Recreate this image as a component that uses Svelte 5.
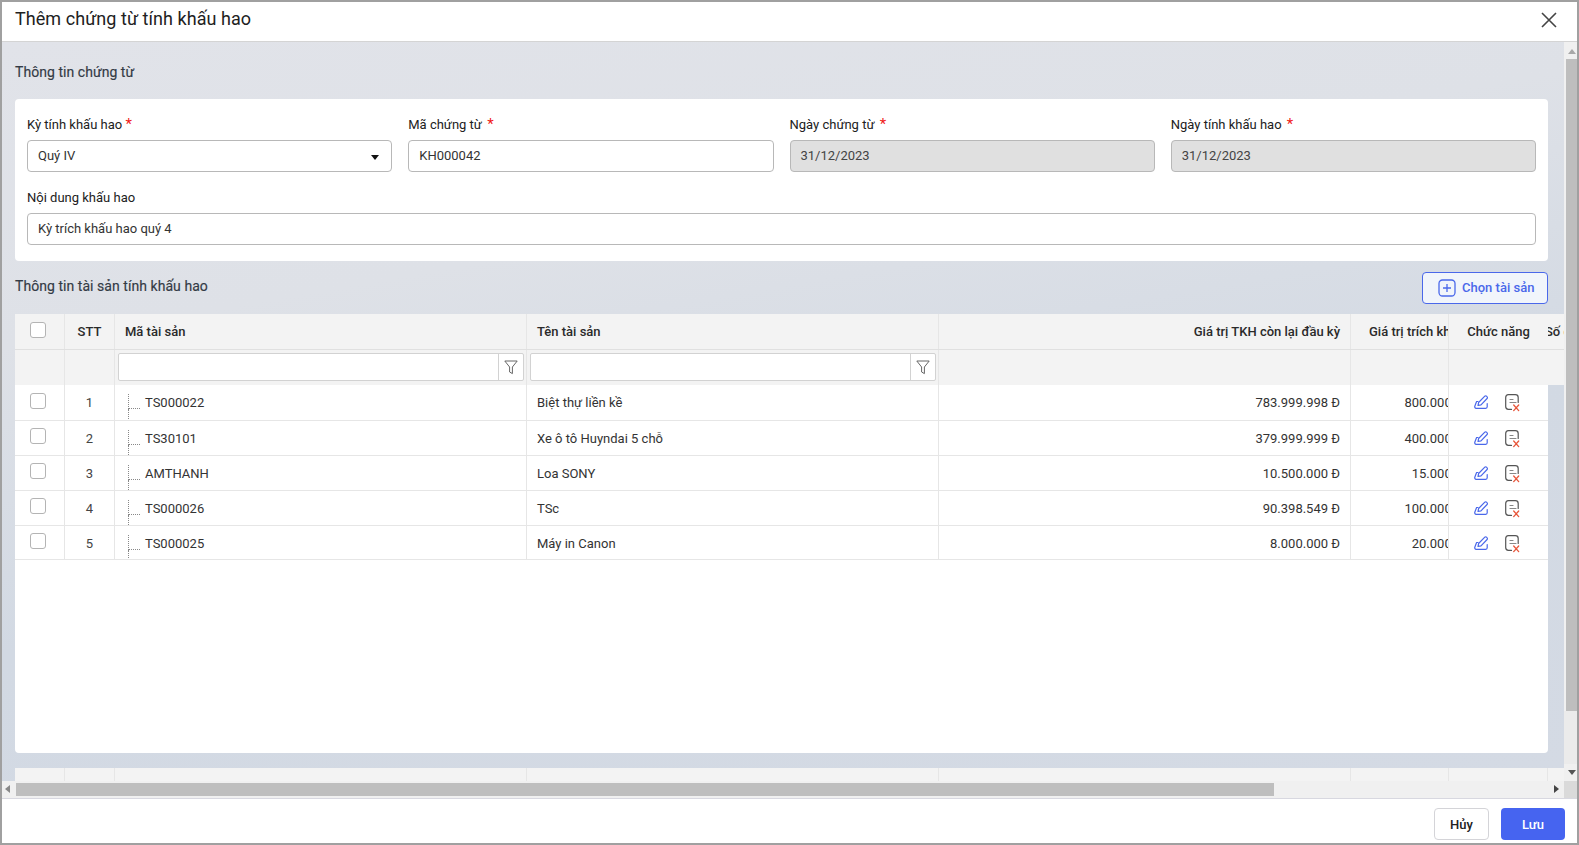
<script>
  const rows = [
    ['1', 'TS000022', 'Biệt thự liền kề', '783.999.998 Đ', '800.000.000 Đ'],
    ['2', 'TS30101', 'Xe ô tô Huyndai 5 chỗ', '379.999.999 Đ', '400.000.000 Đ'],
    ['3', 'AMTHANH', 'Loa SONY', '10.500.000 Đ', '15.000.000 Đ'],
    ['4', 'TS000026', 'TSc', '90.398.549 Đ', '100.000.000 Đ'],
    ['5', 'TS000025', 'Máy in Canon', '8.000.000 Đ', '20.000.000 Đ']
  ];
  const pad = ['', '', '', '', '', ''];
</script>

<div class="modal">
  <header class="head">
    <h1>Thêm chứng từ tính khấu hao</h1>
    <svg class="close" width="16" height="16" viewBox="0 0 16 16"><path d="M1 1L15 15M15 1L1 15" stroke="#444" stroke-width="1.6" fill="none"/></svg>
  </header>

  <div class="mid">
    <div class="scroll">
      <div class="content">
        <h2 class="first">Thông tin chứng từ</h2>
        <section class="card">
          <div class="four">
            <div class="field">
              <span class="label">Kỳ tính khấu hao <i>*</i></span>
              <div class="input">Quý IV<b class="caret"></b></div>
            </div>
            <div class="field">
              <span class="label">Mã chứng từ <i class="sp">*</i></span>
              <div class="input">KH000042</div>
            </div>
            <div class="field">
              <span class="label">Ngày chứng từ <i class="sp">*</i></span>
              <div class="input off">31/12/2023</div>
            </div>
            <div class="field">
              <span class="label">Ngày tính khấu hao <i class="sp">*</i></span>
              <div class="input off">31/12/2023</div>
            </div>
          </div>
          <div class="field second">
            <span class="label">Nội dung khấu hao</span>
            <div class="input">Kỳ trích khấu hao quý 4</div>
          </div>
        </section>

        <div class="bar">
          <h2>Thông tin tài sản tính khấu hao</h2>
          <button class="pick">
            <svg width="18" height="18" viewBox="0 0 18 18" fill="none" stroke="#4a68ea" stroke-width="1.3"><rect x="1" y="1" width="16" height="16" rx="3.5"/><path d="M9 5v8M5 9h8"/></svg>
            Chọn tài sản
          </button>
        </div>

        <div class="table">
          <div class="row th">
            <div class="c ctr"><span class="box"></span></div>
            <div class="c ctr">STT</div>
            <div class="c">Mã tài sản</div>
            <div class="c">Tên tài sản</div>
            <div class="c right">Giá trị TKH còn lại đầu kỳ</div>
            <div class="c clip-h">Giá trị trích khấu hao</div>
            <div class="c ctr fn">Chức năng</div>
            <div class="c clip-n"><span>Số chứng</span></div>
          </div>
          <div class="row filter">
            <div class="c"></div>
            <div class="c"></div>
            <div class="c"><div class="fbox"><span></span><em><svg width="14" height="15" viewBox="0 0 14 15" fill="none" stroke="#666" stroke-width="1"><path d="M.8 1h12.4L8.4 7v6.6L5.6 12V7z"/></svg></em></div></div>
            <div class="c"><div class="fbox"><span></span><em><svg width="14" height="15" viewBox="0 0 14 15" fill="none" stroke="#666" stroke-width="1"><path d="M.8 1h12.4L8.4 7v6.6L5.6 12V7z"/></svg></em></div></div>
            <div class="c"></div>
            <div class="c"></div>
            <div class="c fn"></div>
            <div class="c last"></div>
          </div>
          <div class="rows">
            {#each rows as r}
              <div class="row td">
                <div class="c ctr"><span class="box"></span></div>
                <div class="c ctr">{r[0]}</div>
                <div class="c tree"><span class="dots"></span>{r[1]}</div>
                <div class="c">{r[2]}</div>
                <div class="c right">{r[3]}</div>
                <div class="c clip-v"><span>{r[4]}</span></div>
                <div class="c fn acts">
                  <svg class="pen" width="14" height="14" viewBox="0 0 14 14" fill="none" stroke="#4a68ea" stroke-width="1.2" stroke-linejoin="round" stroke-linecap="round"><path d="M4 6.5H2.6L.8 11.2c-.3 1 .3 2.1 1.3 2.1h9.6c.9 0 1.5-.6 1.5-1.5V8.5"/><path d="M4 10.5l.6-3L10.8 1.2a1.2 1.2 0 0 1 1.7 0l.6.6a1.2 1.2 0 0 1 0 1.7L7 9.8z"/></svg>
                  <svg width="15" height="18" viewBox="0 0 15 18" fill="none" stroke-linecap="round"><path d="M6.5 15.4H3.4A2.8 2.8 0 0 1 .7 12.6V3.4A2.8 2.8 0 0 1 3.4 .7h7A2.8 2.8 0 0 1 13.2 3.4V8.5" stroke="#555" stroke-width="1.2"/><path d="M5 5.5h3M5 8.5h6" stroke="#888" stroke-width="1.2"/><path d="M8.7 11l5 5.6M13.7 11l-5 5.6" stroke="#e8563a" stroke-width="1.3"/></svg>
                </div>
              </div>
            {/each}
          </div>
          <div class="gap"></div>
          <div class="row foot">
            {#each pad as _}<div class="c"></div>{/each}
            <div class="c"></div>
            <div class="c last"></div>
          </div>
        </div>
      </div>

      <div class="vbar">
        <span class="arrow up"></span>
        <span class="vthumb"></span>
        <span class="vtrack"></span>
        <span class="arrow down"></span>
      </div>
    </div>

    <div class="hbar">
      <span class="arrow left"></span>
      <div class="htrack"><span class="hthumb"></span></div>
      <span class="arrow rgt"></span>
      <span class="corner"></span>
    </div>
  </div>

  <footer class="foot-bar">
    <button class="cancel">Hủy</button>
    <button class="save">Lưu</button>
  </footer>
</div>

<style>
  :global(body) { margin: 0; font-family: Roboto, "Liberation Sans", sans-serif; color: #212121; }
  .modal { box-sizing: border-box; width: 1579px; height: 845px; border: 2px solid #a0a0a0; background: #fff; display: flex; flex-direction: column; overflow: hidden; font-size: 13px; }
  .head { flex: none; border-bottom: 1px solid #d4d4d4; display: flex; align-items: center; justify-content: space-between; padding: 0 20px 4px 13px; box-sizing: content-box; height: 35px; }
  h1 { margin: -2px 0 0; font-size: 18px; font-weight: 400; letter-spacing: .05px; color: #212121; }
  .close { display: block; margin-top: 1px; }

  .mid { flex: 1; min-height: 0; display: flex; flex-direction: column; }
  .scroll { flex: 1; min-height: 0; display: flex; background: linear-gradient(170deg, #e1e3e9 0%, #dee1e7 30%, #d2d9e3 60%, #d4dae4 100%); }
  .content { flex: 1; min-width: 0; padding: 0 16px 0 13px; display: flex; flex-direction: column; }
  h2 { margin: 0; font-size: 14px; font-weight: 400; letter-spacing: .05px; color: #333a45; -webkit-text-stroke: .15px #333a45; }
  .first { padding-top: 21px; height: 36px; line-height: 18px; }

  .card { background: #fff; border-radius: 4px; padding: 17px 12px 16px; height: 129px; box-sizing: content-box; }
  .four { display: grid; grid-template-columns: repeat(4, 1fr); gap: 16px; }
  .field { display: flex; flex-direction: column; }
  .second { margin-top: 18px; }
  .second .label { height: 23px; }
  .label { height: 24px; line-height: 16px; font-size: 13px; color: #212121; }
  .label i { color: #f01818; font-style: normal; font-size: 15px; }
  .label i.sp { margin-left: 2px; }
  .input { box-sizing: border-box; height: 32px; border: 1px solid #b8b8b8; border-radius: 4px; padding: 0 10px; line-height: 30px; font-size: 13px; color: #333; position: relative; background: #fff; }
  .input.off { background: #e0e0e0; color: #444; }
  .caret { position: absolute; right: 12px; top: 14px; width: 0; height: 0; border: 4.5px solid transparent; border-top: 5px solid #111; border-bottom: 0; }

  .bar { height: 53px; display: flex; align-items: flex-start; justify-content: space-between; padding-top: 11px; box-sizing: border-box; }
  .bar h2 { margin-top: 5px; line-height: 18px; }
  .pick { box-sizing: border-box; width: 126px; height: 32px; border: 1px solid #4a68ea; border-radius: 4px; background: #f1f5fb; color: #4a68ea; font: 500 13px Roboto, sans-serif; display: flex; align-items: center; gap: 6px; padding: 0 0 1px 15px; }

  .table { flex: 1; min-height: 0; display: flex; flex-direction: column; margin-right: -16px; }
  .row { display: grid; grid-template-columns: 50px 50px 412px 412px 412px 98px 99px 16px; }
  .c { box-sizing: border-box; border-right: 1px solid #e6e6e6; padding: 0 10px; overflow: hidden; white-space: nowrap; }
  .ctr { text-align: center; padding: 0; }
  .right { text-align: right; }
  .th { height: 36px; background: #f3f3f3; border-bottom: 1px solid #e0e0e0; box-sizing: border-box; font-weight: 500; font-size: 13px; color: #2a2a2a; line-height: 36px; }
  .th .box { margin-top: 8px; }
  .th .fn, .filter .fn { border-right: 0; }
  .clip-h { padding: 0 0 0 18px; }
  .clip-v { padding: 0; }
  .clip-v span { display: block; width: 138px; text-align: right; }
  .clip-n { border: 0; padding: 0; }
  .clip-n span { display: block; margin-left: -3px; }
  .last { border: 0; }
  .filter { height: 35px; background: #f3f3f3; }
  .filter .c { padding: 3px 3px 4px 3px; overflow: visible; }
  .fbox { box-sizing: border-box; height: 28px; width: 406px; background: #fff; border: 1px solid #d2d2d2; border-radius: 2px; display: flex; }
  .fbox span { flex: 1; }
  .fbox em { width: 24px; border-left: 1px solid #d2d2d2; display: flex; align-items: center; justify-content: center; }

  .rows { flex: 1; width: 1533px; background: #fff; border-radius: 0 0 4px 4px; }
  .td { height: 35px; box-sizing: border-box; border-bottom: 1px solid #e6e6e6; grid-template-columns: 50px 50px 412px 412px 412px 98px 99px; line-height: 35px; color: #333; background: #fff; }
  .td:nth-child(1) { height: 36px; }
  .td:nth-child(5) { height: 34px; }
  .td .box { margin-top: 7px; }
  .td:nth-child(1) .box { margin-top: 8px; }
  .td .ctr:nth-child(2) { color: #444; }
  .fn { padding: 0; }
  .td .fn { border-right: 0; }
  .box { display: block; box-sizing: border-box; width: 16px; height: 16px; margin: 0 0 0 15px; border: 1px solid #b4b4b4; border-radius: 3px; background: #fff; }
  .tree { position: relative; padding-left: 30px; }
  .dots { position: absolute; left: 13px; top: 9px; width: 11px; height: 14px; border-left: 1px dotted #888; border-bottom: 1px dotted #888; }
  .dots::after { content: ""; position: absolute; left: -1px; top: 15px; height: 10px; border-left: 1px dotted #888; }
  .acts { display: flex; align-items: flex-start; gap: 17px; padding: 9px 0 0 25px; }
  .acts svg { flex: none; }
  .acts .pen { margin-top: 1px; }

  .gap { flex: none; height: 15px; }
  .foot { flex: none; height: 13px; background: #f3f3f3; }

  .vbar { flex: none; width: 13px; background: #f0f0f0; display: flex; flex-direction: column; align-items: stretch; }
  .vthumb { flex: none; height: 652px; margin-left: 2px; background: #bebebe; }
  .vtrack { flex: 1; background: #ebebeb; }
  .arrow { flex: none; display: block; position: relative; }
  .arrow.up, .arrow.down { height: 17px; }
  .arrow.up::before, .arrow.down::before { content: ""; position: absolute; left: 4px; border: 4.5px solid transparent; }
  .arrow.up::before { top: 7px; border-bottom: 5px solid #a8a8a8; border-top: 0; }
  .arrow.down::before { top: 6px; border-top: 5px solid #555; border-bottom: 0; }
  .hbar { flex: none; box-sizing: content-box; height: 13px; background: #f0f0f0; display: flex; align-items: stretch; border-bottom: 1px solid #d8d8e0; padding: 2px 0; }
  .arrow.left, .arrow.rgt { width: 14px; }
  .arrow.left::before, .arrow.rgt::before { content: ""; position: absolute; top: 2px; border: 4.5px solid transparent; }
  .arrow.left::before { left: 3px; border-right: 5px solid #888; border-left: 0; }
  .arrow.rgt::before { left: 4px; border-left: 5px solid #444; border-right: 0; }
  .htrack { flex: 1; }
  .hthumb { display: block; width: 1258px; height: 100%; background: #bebebe; }
  .corner { flex: none; width: 13px; margin: -2px 0; background: #dadada; }

  .foot-bar { flex: none; height: 44px; display: flex; justify-content: flex-end; align-items: flex-start; gap: 12px; padding: 9px 12px 0 0; box-sizing: border-box; }
  .foot-bar button { box-sizing: border-box; height: 32px; border-radius: 4px; font: 500 13px Roboto, sans-serif; }
  .cancel { width: 55px; background: #fff; border: 1px solid #d4d4d8; color: #222; }
  .save { width: 64px; background: #4664f0; border: 0; color: #fff; }
</style>
